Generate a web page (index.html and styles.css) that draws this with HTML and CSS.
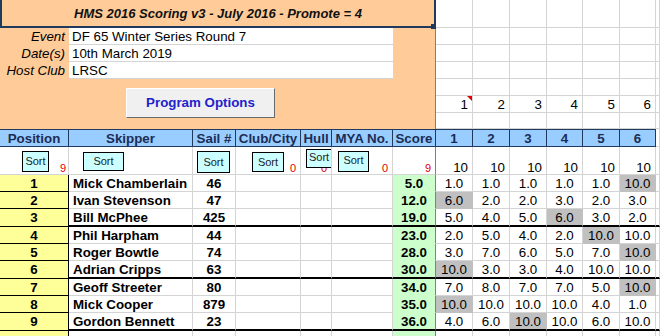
FILE: index.html
```html
<!DOCTYPE html>
<html lang="en">
<head>
    <meta charset="UTF-8">
    <meta name="viewport" content="width=device-width, initial-scale=1.0">
    <title>HMS 2016 Scoring v3</title>
    <link rel="stylesheet" href="styles.css">
</head>
<body>
    <div class="sheet">
        <table class="grid">
            <colgroup>
                <col class="c-pos"><col class="c-skip"><col class="c-sail"><col class="c-club"><col class="c-hull"><col class="c-mya"><col class="c-score">
                <col class="c-r37"><col class="c-r37"><col class="c-r37"><col class="c-r36"><col class="c-r37"><col class="c-r36"><col class="c-end">
            </colgroup>

            <!-- top block -->
            <tr class="r-title">
                <td colspan="7" class="title">HMS 2016 Scoring v3 - July 2016 - Promote = 4<span class="handle"></span></td>
                <td></td><td></td><td></td><td></td><td></td><td></td><td></td>
            </tr>
            <tr class="r17">
                <td class="lbl">Event</td>
                <td colspan="5" class="val">DF 65 Winter Series Round 7</td>
                <td class="peach edge"></td>
                <td></td><td></td><td></td><td></td><td></td><td></td><td></td>
            </tr>
            <tr class="r17">
                <td class="lbl">Date(s)</td>
                <td colspan="5" class="val">10th March 2019</td>
                <td class="peach edge"></td>
                <td></td><td></td><td></td><td></td><td></td><td></td><td></td>
            </tr>
            <tr class="r17">
                <td class="lbl">Host Club</td>
                <td colspan="5" class="val">LRSC</td>
                <td class="peach edge"></td>
                <td></td><td></td><td></td><td></td><td></td><td></td><td></td>
            </tr>
            <tr class="r17">
                <td colspan="7" class="peach edge"></td>
                <td></td><td></td><td></td><td></td><td></td><td></td><td></td>
            </tr>
            <tr class="r17">
                <td colspan="7" class="peach edge"></td>
                <td class="num note">1<span class="tri"></span></td><td class="num">2</td><td class="num">3</td><td class="num">4</td><td class="num">5</td><td class="num">6</td><td></td>
            </tr>
            <tr class="r16">
                <td colspan="7" class="peach edge"></td>
                <td></td><td></td><td></td><td></td><td></td><td></td><td></td>
            </tr>

            <!-- column headings -->
            <tr class="head">
                <th>Position</th><th>Skipper</th><th>Sail #</th><th>Club/City</th><th>Hull</th><th>MYA No.</th><th>Score</th>
                <th>1</th><th>2</th><th>3</th><th>4</th><th>5</th><th>6</th><td></td>
            </tr>
            <tr class="sorts">
                <td><div class="sc"><span class="sort s-pos">Sort</span><span class="cnt cnt-pos">9</span></div></td>
                <td><div class="sc"><span class="sort s-skip">Sort</span></div></td>
                <td><div class="sc"><span class="sort s-sail">Sort</span></div></td>
                <td><div class="sc"><span class="sort s-club">Sort</span><span class="cnt">0</span></div></td>
                <td><div class="sc"><span class="cnt">0</span><span class="sort s-hull">Sort</span></div></td>
                <td><div class="sc"><span class="sort s-mya">Sort</span><span class="cnt">0</span></div></td>
                <td class="edge"><div class="sc"><span class="cnt">9</span></div></td>
                <td class="ten">10</td><td class="ten">10</td><td class="ten">10</td><td class="ten">10</td><td class="ten">10</td><td class="ten">10</td><td></td>
            </tr>

            <!-- results -->
            <tr class="row">
                <td class="pos">1</td><td class="name">Mick Chamberlain</td><td class="sail">46</td><td></td><td></td><td></td><td class="score">5.0</td>
                <td class="pts">1.0</td><td class="pts">1.0</td><td class="pts">1.0</td><td class="pts">1.0</td><td class="pts">1.0</td><td class="pts hl">10.0</td><td></td>
            </tr>
            <tr class="row">
                <td class="pos">2</td><td class="name">Ivan Stevenson</td><td class="sail">47</td><td></td><td></td><td></td><td class="score">12.0</td>
                <td class="pts hl">6.0</td><td class="pts">2.0</td><td class="pts">2.0</td><td class="pts">3.0</td><td class="pts">2.0</td><td class="pts">3.0</td><td></td>
            </tr>
            <tr class="row sep">
                <td class="pos">3</td><td class="name">Bill McPhee</td><td class="sail">425</td><td></td><td></td><td></td><td class="score">19.0</td>
                <td class="pts">5.0</td><td class="pts">4.0</td><td class="pts">5.0</td><td class="pts hl">6.0</td><td class="pts">3.0</td><td class="pts">2.0</td><td></td>
            </tr>
            <tr class="row">
                <td class="pos">4</td><td class="name">Phil Harpham</td><td class="sail">44</td><td></td><td></td><td></td><td class="score">23.0</td>
                <td class="pts">2.0</td><td class="pts">5.0</td><td class="pts">4.0</td><td class="pts">2.0</td><td class="pts hl">10.0</td><td class="pts">10.0</td><td></td>
            </tr>
            <tr class="row">
                <td class="pos">5</td><td class="name">Roger Bowtle</td><td class="sail">74</td><td></td><td></td><td></td><td class="score">28.0</td>
                <td class="pts">3.0</td><td class="pts">7.0</td><td class="pts">6.0</td><td class="pts">5.0</td><td class="pts">7.0</td><td class="pts hl">10.0</td><td></td>
            </tr>
            <tr class="row sep">
                <td class="pos">6</td><td class="name">Adrian Cripps</td><td class="sail">63</td><td></td><td></td><td></td><td class="score">30.0</td>
                <td class="pts hl">10.0</td><td class="pts">3.0</td><td class="pts">3.0</td><td class="pts">4.0</td><td class="pts">10.0</td><td class="pts">10.0</td><td></td>
            </tr>
            <tr class="row">
                <td class="pos">7</td><td class="name">Geoff Streeter</td><td class="sail">80</td><td></td><td></td><td></td><td class="score">34.0</td>
                <td class="pts">7.0</td><td class="pts">8.0</td><td class="pts">7.0</td><td class="pts">7.0</td><td class="pts">5.0</td><td class="pts hl">10.0</td><td></td>
            </tr>
            <tr class="row">
                <td class="pos">8</td><td class="name">Mick Cooper</td><td class="sail">879</td><td></td><td></td><td></td><td class="score">35.0</td>
                <td class="pts hl">10.0</td><td class="pts">10.0</td><td class="pts">10.0</td><td class="pts">10.0</td><td class="pts">4.0</td><td class="pts">1.0</td><td></td>
            </tr>
            <tr class="row sep">
                <td class="pos">9</td><td class="name">Gordon Bennett</td><td class="sail">23</td><td></td><td></td><td></td><td class="score">36.0</td>
                <td class="pts">4.0</td><td class="pts">6.0</td><td class="pts hl">10.0</td><td class="pts">10.0</td><td class="pts">6.0</td><td class="pts">10.0</td><td></td>
            </tr>
            <tr class="row">
                <td class="pos"></td><td class="name"></td><td></td><td></td><td></td><td></td><td class="score"></td>
                <td></td><td></td><td></td><td></td><td></td><td></td><td></td>
            </tr>
        </table>

        <div class="opts">Program Options</div>
    </div>
</body>
</html>
```

FILE: styles.css
```css
body {
    margin: 0;
    background: #fff;
    font-family: "Liberation Sans", Arial, sans-serif;
    font-size: 10pt;
    color: #000;
    overflow: hidden;
}
.sheet {
    position: relative;
    width: 660px;
}
.grid {
    table-layout: fixed;
    width: 660px;
    border-collapse: separate;
    border-spacing: 0;
}
.grid td,
.grid th {
    padding: 0;
    overflow: hidden;
    white-space: nowrap;
    line-height: 15px;
    border-right: 1px solid #d4d4d4;
    border-bottom: 1px solid #d4d4d4;
}

/* column widths */
.c-pos { width: 69px; }
.c-skip { width: 124px; }
.c-sail { width: 43px; }
.c-club { width: 65px; }
.c-hull { width: 31px; }
.c-mya { width: 61px; }
.c-score { width: 43px; }
.c-r37 { width: 37px; }
.c-r36 { width: 36px; }
.c-end { width: 4px; }

/* row heights */
.r-title { height: 28px; }
.r17 { height: 17px; }
.r16 { height: 16px; }
.head { height: 18px; }
.sorts { height: 28px; }
.row { height: 17px; }
.row.sep { height: 18px; }

/* top block */
.grid .title {
    position: relative;
    overflow: visible;
    background: #ffcc99;
    border: 2px solid #1f3a5c;
    border-top: none;
    text-align: center;
    font-size: 13px;
    font-weight: bold;
    font-style: italic;
    color: #111;
}
.handle {
    position: absolute;
    right: -2px;
    bottom: -3px;
    width: 5px;
    height: 5px;
    background: #1f3a5c;
}
.grid .peach {
    background: #ffcc99;
    border-bottom: none;
    border-right: none;
}
.grid .lbl {
    background: #ffcc99;
    border: none;
    text-align: right;
    font-style: italic;
    padding-right: 4px;
}
.grid .val {
    background: #fff;
    border-right: none;
    border-bottom: 1px solid #d4d4d4;
    padding-left: 3px;
}
.grid .edge {
    border-right: 1px solid #808080;
}
.grid .num {
    text-align: right;
    padding-right: 4px;
}
.grid .note {
    position: relative;
}
.tri {
    position: absolute;
    top: 0;
    right: 0;
    width: 0;
    height: 0;
    border-top: 5px solid #e00000;
    border-left: 5px solid transparent;
}
.opts {
    position: absolute;
    left: 126px;
    top: 88px;
    width: 149px;
    height: 30px;
    box-sizing: border-box;
    background: #f0f0f0;
    border: 1px solid;
    border-color: #ffffff #6a6a6a #6a6a6a #ffffff;
    color: #2222cc;
    font-weight: bold;
    font-size: 10pt;
    line-height: 28px;
    text-align: center;
}

/* headings */
.grid .head th {
    background: #99ccff;
    color: #1b2d55;
    font-weight: bold;
    text-align: center;
    border-top: 1px solid #1f3a5c;
    border-right: 1px solid #1f3a5c;
    border-bottom: 1px solid #1f3a5c;
}

/* sort buttons */
.sc {
    position: relative;
    display: flex;
    align-items: flex-start;
    height: 27px;
}
.sort {
    display: block;
    box-sizing: border-box;
    flex: none;
    background: #ccffff;
    border: 1px solid #000;
    font-size: 11px;
    color: #222;
    text-align: center;
}
.s-pos { margin: 4px 0 0 22px; width: 27px; height: 21px; line-height: 19px; }
.s-skip { margin: 5px 0 0 14px; width: 41px; height: 19px; line-height: 17px; }
.s-sail { margin: 4px 0 0 4px; width: 33px; height: 22px; line-height: 20px; }
.s-club { margin: 5px 0 0 16px; width: 32px; height: 20px; line-height: 18px; }
.s-hull { position: relative; margin: 2px 0 0 5px; width: 30px; height: 19px; line-height: 14px; text-align: left; padding-left: 2px; }
.s-mya { margin: 4px 0 0 6px; width: 31px; height: 21px; line-height: 17px; }
.cnt {
    position: absolute;
    right: 4px;
    bottom: 0;
    font-size: 11px;
    line-height: 11px;
    color: #e00000;
}
.cnt-pos { right: 2px; }
.grid .ten {
    text-align: right;
    vertical-align: bottom;
    padding-right: 4px;
    line-height: 12px;
}

/* results */
.grid .pos {
    background: #ffff99;
    font-weight: bold;
    text-align: center;
    border-right: 1px solid #000;
    border-bottom: 1px solid #000;
}
.grid .name {
    font-weight: bold;
    padding-left: 4px;
}
.grid .sail {
    font-weight: bold;
    text-align: center;
}
.grid .score {
    background: #ccffcc;
    font-weight: bold;
    text-align: center;
    border-right: 1px solid #808080;
    border-bottom-color: #ccffcc;
}
.grid .pts {
    text-align: center;
}
.grid .hl {
    background: #c0c0c0;
    border-right-color: #c0c0c0;
    border-bottom-color: #c0c0c0;
}
.grid .sep td {
    border-bottom: 2px solid #000;
}
.grid .sep .pos {
    border-bottom: 1px solid #000;
}
```
